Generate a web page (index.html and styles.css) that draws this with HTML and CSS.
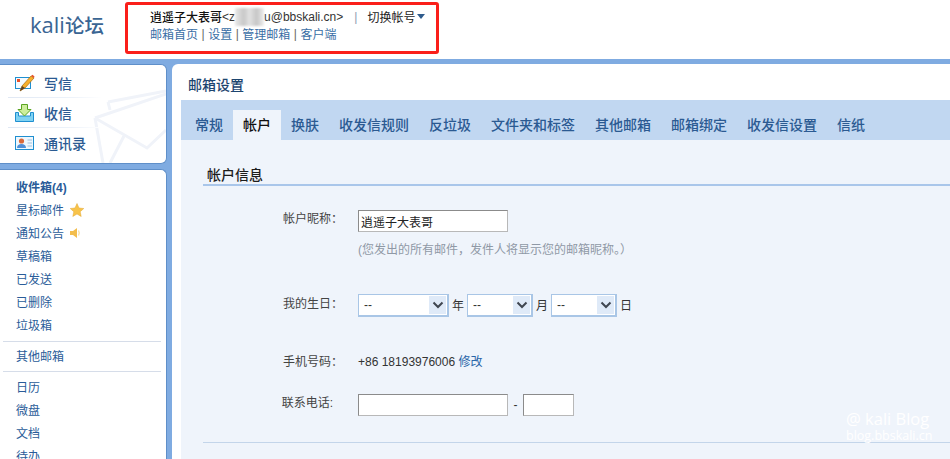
FILE: index.html
```html
<!DOCTYPE html>
<html lang="zh">
<head>
<meta charset="utf-8">
<title>邮箱设置</title>
<link rel="stylesheet" href="styles.css">
</head>
<body>
<header class="top">
  <div class="logo">kali<span class="logo-cn">论坛</span></div>
  <div class="account">
    <div class="acc-line1"><b class="nick">逍遥子大表哥</b><span class="addr">&lt;z<span class="blur"></span>u@bbskali.cn&gt;</span><span class="sep1">|</span><span class="switch">切换帐号</span><span class="caret"></span></div>
    <div class="acc-line2"><a>邮箱首页</a><i>|</i><a>设置</a><i>|</i><a>管理邮箱</a><i>|</i><a>客户端</a></div>
  </div>
</header>
<div class="frame">
  <aside class="side">
    <div class="panel quick">
      <svg class="envelope" width="80" height="75" viewBox="0 0 80 75"><g fill="none" stroke="#f0f3f9" stroke-width="3"><path d="M22 14 80 3"/><path d="M22 14 24 22"/><path d="M9 30 80 6"/><path d="M9 30 17 75"/><path d="M9 30 61 60 80 42"/><path d="M24 75 38 48"/></g></svg>
      <div class="q-row q-line">
        <svg class="q-icon" width="20" height="18" viewBox="0 0 20 18"><rect x="0.5" y="3.500" width="15" height="11" fill="#f4fbff" stroke="#1f8fd0"/><rect x="2" y="5" width="3" height="3" fill="#e8512a"/><path d="M5 17 7 12 16 2 19 4 10 14Z" fill="#f7b02b" stroke="#a86a10" stroke-width="0.700"/><path d="M16 2 17.500 0.800 19.500 2.500 19 4Z" fill="#e8512a"/><path d="M5 17 7 12 10 14Z" fill="#5a4028"/></svg>
        <span>写信</span>
      </div>
      <div class="q-row q-line">
        <svg class="q-icon" width="20" height="20" viewBox="0 0 20 20"><path d="M.5 9.500V18.500H18.500V9.500H15.500V13H3.500V9.500Z" fill="#7fd2f2" stroke="#1f8fd0"/><path d="M6.500 1.500H12.500V6.500H16L9.500 13 3 6.500H6.500Z" fill="#cdee9c" stroke="#5aa522"/></svg>
        <span>收信</span>
      </div>
      <div class="q-row">
        <svg class="q-icon" width="20" height="16" viewBox="0 0 20 16"><rect x="0.500" y="1.500" width="18" height="13" fill="#eef7fd" stroke="#1f8fd0"/><circle cx="6.500" cy="6" r="2.600" fill="#d9693a"/><path d="M2 13c0-3 2-4 4.500-4S11 10 11 13Z" fill="#4e8fd8"/><path d="M12.500 5H17M12.500 8H17M12.500 11H17" stroke="#9fc0dd"/></svg>
        <span>通讯录</span>
      </div>
    </div>
    <nav class="panel folders">
      <a class="f-item f-bold">收件箱(4)</a>
      <a class="f-item">星标邮件<svg class="f-icon" width="14" height="14" viewBox="0 0 14 14"><path d="M7 .5 9 5l4.800.5-3.600 3.200 1 4.800L7 11l-4.200 2.500 1-4.800L.2 5.500 5 5Z" fill="#f8c34a" stroke="#e2a832" stroke-width="0.500"/></svg></a>
      <a class="f-item">通知公告<svg class="f-icon" width="12" height="12" viewBox="0 0 12 12"><path d="M0 4H3L7 1V11L3 8H0Z" fill="#f3bd4c"/><path d="M8.500 3.500Q10 6 8.500 8.500" fill="none" stroke="#f7dc9c" stroke-width="1.300"/></svg></a>
      <a class="f-item">草稿箱</a>
      <a class="f-item">已发送</a>
      <a class="f-item">已删除</a>
      <a class="f-item">垃圾箱</a>
      <hr class="f-rule">
      <a class="f-item f-other">其他邮箱</a>
      <hr class="f-rule">
      <a class="f-item">日历</a>
      <a class="f-item">微盘</a>
      <a class="f-item">文档</a>
      <a class="f-item">待办</a>
    </nav>
  </aside>
  <main class="main">
    <h1 class="title">邮箱设置</h1>
    <div class="settings">
      <nav class="tabs">
        <a class="tab">常规</a>
        <a class="tab active">帐户</a>
        <a class="tab">换肤</a>
        <a class="tab">收发信规则</a>
        <a class="tab">反垃圾</a>
        <a class="tab">文件夹和标签</a>
        <a class="tab">其他邮箱</a>
        <a class="tab">邮箱绑定</a>
        <a class="tab">收发信设置</a>
        <a class="tab">信纸</a>
      </nav>
      <section class="body">
        <h2 class="section">帐户信息</h2>
        <div class="row row-nick">
          <label class="lbl">帐户昵称：</label>
          <div class="val">
            <input class="txt txt-nick" type="text" value="逍遥子大表哥">
            <p class="hint">(您发出的所有邮件，发件人将显示您的邮箱昵称。）</p>
          </div>
        </div>
        <div class="row row-birth">
          <label class="lbl">我的生日：</label>
          <div class="val inline">
            <span class="sel sel-y">--<span class="arrow"><svg width="12" height="8" viewBox="0 0 12 8"><path d="M1.500 1.500 6 6l4.500-4.500" fill="none" stroke="#3f4650" stroke-width="2"/></svg></span></span><span class="unit">年</span>
            <span class="sel sel-m">--<span class="arrow"><svg width="12" height="8" viewBox="0 0 12 8"><path d="M1.500 1.500 6 6l4.500-4.500" fill="none" stroke="#3f4650" stroke-width="2"/></svg></span></span><span class="unit">月</span>
            <span class="sel sel-m">--<span class="arrow"><svg width="12" height="8" viewBox="0 0 12 8"><path d="M1.500 1.500 6 6l4.500-4.500" fill="none" stroke="#3f4650" stroke-width="2"/></svg></span></span><span class="unit">日</span>
          </div>
        </div>
        <div class="row row-phone">
          <label class="lbl">手机号码：</label>
          <div class="val">+86 18193976006 <a class="link">修改</a></div>
        </div>
        <div class="row row-tel">
          <label class="lbl lbl-tel">联系电话:</label>
          <div class="val inline">
            <input class="txt txt-tel" type="text"><span class="dash">-</span><input class="txt txt-ext" type="text">
          </div>
        </div>
        <div class="divider"></div>
        <div class="mark"><div class="mark-a">@ kali Blog</div><div class="mark-b">blog.bbskali.cn</div></div>
      </section>
    </div>
  </main>
</div>
</body>
</html>
```
FILE: styles.css
```css
* { box-sizing: border-box; }
html, body { margin: 0; height: 459px; overflow: hidden; }
body { font-family: "Liberation Sans", "Noto Sans CJK SC", sans-serif; font-size: 12px; color: #333; background: #7fabe1; }
a { color: #1f5a99; text-decoration: none; }

.top { height: 59px; background: #fff; display: flex; align-items: flex-start; }
.logo { width: 125px; padding: 12px 0 0 30px; font: 500 22px/24px "Open Sans", "Noto Sans CJK SC", sans-serif; color: #3a6593; white-space: nowrap; }
.logo-cn { font-size: 19.500px; font-family: "Noto Sans CJK SC", sans-serif; }
.account { margin-top: 2px; width: 314px; height: 52px; border: 3px solid #fa1f1a; border-radius: 3px; padding: 3px 0 0 22px; }
.acc-line1 { display: flex; align-items: center; height: 17px; white-space: nowrap; color: #222; }
.nick { font-weight: 500; color: #111; font-size: 12px; }
.addr { font-size: 12px; color: #333; display: inline-flex; align-items: center; }
.blur { display: inline-block; width: 29px; height: 18px; background: linear-gradient(90deg, #e8e8e8, #c8c8c8 30%, #e2e2e2 50%, #c6c6c6 75%, #eee); filter: blur(1px); }
.sep1 { margin: 0 10px 0 11px; color: #8a9bb0; }
.caret { margin-left: 2px; width: 0; height: 0; border: 4px solid transparent; border-top: 5px solid #2f5b8d; border-bottom: 0; }
.acc-line2 { display: flex; height: 17px; align-items: center; white-space: nowrap; color: #1f5a99; }
.acc-line2 a { color: #3a6ea5; }
.acc-line2 i { font-style: normal; color: #666; margin: 0 3.500px; }

.frame { height: 400px; padding-top: 5px; display: flex; align-items: flex-start; }
.side { width: 167px; flex: none; display: flex; flex-direction: column; gap: 5px; }
.panel { background: #fff; border: 1px solid #5f8fc9; border-left: 0; border-radius: 0 6px 6px 0; }
.quick { position: relative; height: 100px; padding-top: 3px; overflow: hidden; }
.envelope { position: absolute; right: 0; bottom: 0; }
.q-row { position: relative; display: flex; align-items: center; height: 30px; margin-left: 8px; padding-left: 7px; font-size: 14px; font-weight: 500; color: #2b5a92; }
.q-line { width: 94px; background: linear-gradient(90deg, #e0e8f4, #eef3fa 70%, #fff) bottom left / 100% 1px no-repeat; }
.q-row span { margin-left: 9px; white-space: nowrap; }
.q-icon { flex: none; width: 20px; }
.folders { height: 300px; padding-top: 5px; border-radius: 0 6px 0 0; border-bottom: 0; }
.f-item { display: flex; align-items: center; height: 23px; padding-left: 16px; color: #2a5c99; white-space: nowrap; }
.f-bold { font-weight: 700; }
.f-icon { margin-left: 6px; }
.f-rule { margin: 5px 5px 0 3px; height: 1px; border: 0; background: #d6dde9; }
.f-other { height: 23px; margin-top: 2px; }
.f-other + .f-rule { margin-top: 4px; margin-bottom: 3px; }

.main { flex: 1; margin-left: 5px; height: 400px; background: #fff; border-radius: 6px 0 0 0; padding-top: 1px; }
.title { margin: 0; height: 35px; padding: 10px 0 0 16px; font-size: 14px; line-height: 20px; font-weight: 500; color: #1d456f; }
.settings { margin-left: 9px; }
.tabs { height: 40px; background: #c1d7f1; padding: 10px 0 0 4px; display: flex; }
.tab { height: 30px; line-height: 30px; padding: 0 10px; font-size: 14px; font-weight: 500; color: #2b5a92; white-space: nowrap; }
.active { color: #111; background: #eff4fb; }
.body { position: relative; height: 320px; background: #eff4fb; overflow: hidden; padding-top: 25px; }
.section { margin: 0 0 0 22px; height: 21px; border-bottom: 2px solid #a9c6ea; padding: 1px 0 0 4px; font-size: 14px; line-height: 18px; font-weight: 500; color: #1c1c1c; }
.row { display: flex; align-items: flex-start; }
.lbl { width: 177px; padding-right: 15px; text-align: right; color: #444; flex: none; white-space: nowrap; line-height: 20px; }
.row-nick { margin-top: 24px; height: 84px; }
.row-nick .lbl { line-height: 18px; }
.txt { display: block; height: 22px; background: #fff; border: 1px solid; border-color: #8b8b8b #b8b8b8 #b8b8b8 #8b8b8b; padding: 0 2px; font: 12px "Liberation Sans", "Noto Sans CJK SC", sans-serif; color: #222; outline: 0; border-radius: 0; }
.txt-nick { width: 150px; }
.hint { margin: 9px 0 0; color: #8f99a6; line-height: 18px; white-space: nowrap; }
.val { white-space: nowrap; line-height: 20px; }
.inline { display: flex; align-items: center; }
.row-birth { height: 58px; }
.sel { position: relative; display: block; height: 23px; background: #fff; border: 2px solid #a9c6e6; border-width: 1px 2px 2px 1px; padding-left: 5px; line-height: 21px; color: #333; }
.sel-y { width: 91px; }
.sel-m { width: 66px; }
.arrow { position: absolute; right: 1px; top: 1px; width: 17px; height: 18px; background: #dfeaf8; display: flex; align-items: center; justify-content: center; }
.unit { width: 18px; text-align: center; color: #333; }
.row-phone { height: 42px; }
.link { color: #2a66a8; }
.row-tel { height: 22px; }
.lbl-tel { padding-right: 25px; line-height: 18px; }
.txt-tel { width: 150px; }
.dash { width: 15px; text-align: center; }
.txt-ext { width: 51px; }
.divider { margin: 26px 0 0 22px; height: 1px; background: #c3d5ea; }
.mark { position: absolute; left: 665px; top: 270px; color: #fff; text-align: left; white-space: nowrap; }
.mark-a { font: 16.500px/18px "Open Sans", sans-serif; }
.mark-b { font: 12.500px/16px "Open Sans", sans-serif; }
```
